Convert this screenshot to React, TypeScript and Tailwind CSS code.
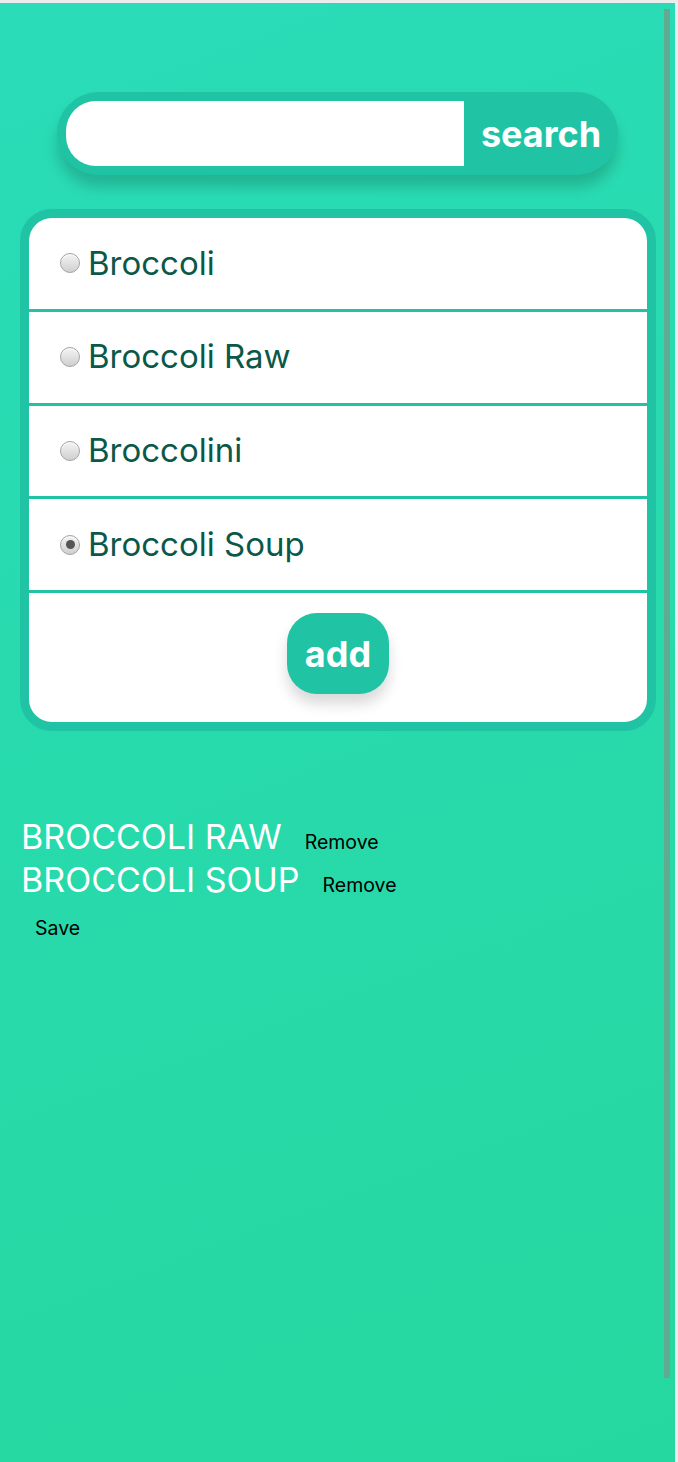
import React from 'react'

const foods = [
    { name: 'Broccoli', checked: false },
    { name: 'Broccoli Raw', checked: false },
    { name: 'Broccolini', checked: false },
    { name: 'Broccoli Soup', checked: true },
]

const saved = ['BROCCOLI RAW', 'BROCCOLI SOUP']

function Radio({ checked }: { checked: boolean }) {
    return (
        <span className="w-[20px] h-[20px] rounded-full border border-[#a3a3a3] bg-[linear-gradient(#f4f4f4,#cfcfcf)] shadow-[inset_0_1px_1px_rgba(255,255,255,0.8)] flex items-center justify-center shrink-0">
            {checked && <span className="w-[9px] h-[9px] rounded-full bg-[#555]"></span>}
        </span>
    )
}

export default function App() {
    return (
        <div className="min-h-screen bg-[#ececec] pt-[3px] pr-[3px] font-['Inter',sans-serif]">
            <div className="relative h-[1459px] bg-[linear-gradient(160deg,#2adcb8,#25d89f)]">
                {/* fake scrollbar */}
                <div className="absolute right-[5px] top-[6px] w-[6px] h-[1369px] bg-[#62ab93]"></div>

                <div className="pt-[89px]">
                    <form className="ml-[57px] w-[561px] h-[83px] flex bg-[#20c4a4] rounded-full pl-[9px] py-[9px] shadow-[0_12px_14px_rgba(0,0,0,0.18)]">
                        <input className="w-[398px] h-full bg-white rounded-l-[30px] outline-none px-4" />
                        <button type="button" className="flex-1 text-white font-bold text-[36px]">search</button>
                    </form>

                    <div className="ml-[20px] mt-[34px] w-[636px] border-[9px] border-[#20c4a4] rounded-[32px] bg-white overflow-hidden">
                        {foods.map((food) => (
                            <div key={food.name} className="h-[93.75px] border-b-[3px] border-[#20c4a4] flex items-center pl-[31px] gap-[8px]">
                                <Radio checked={food.checked} />
                                <span className="text-[#0b5848] text-[33px]">{food.name}</span>
                            </div>
                        ))}
                        <div className="h-[129px] flex justify-center pt-[20px]">
                            <button type="button" className="w-[102px] h-[81px] rounded-[30px] bg-[#20c4a4] text-white font-bold text-[36px] shadow-[0_10px_14px_rgba(0,0,0,0.15)]">add</button>
                        </div>
                    </div>

                    <div className="ml-[21px] mt-[84px]">
                        {saved.map((item) => (
                            <div key={item} className="text-[34px] leading-[43px]">
                                <span className="text-white">{item}</span>
                                <button type="button" className="ml-[23px] text-[19.5px] leading-[20px] text-black">Remove</button>
                            </div>
                        ))}
                        <div className="text-[34px] leading-[43px]">
                            <button type="button" className="ml-[14px] text-[19.5px] leading-[20px] text-black">Save</button>
                        </div>
                    </div>
                </div>
            </div>
        </div>
    )
}
